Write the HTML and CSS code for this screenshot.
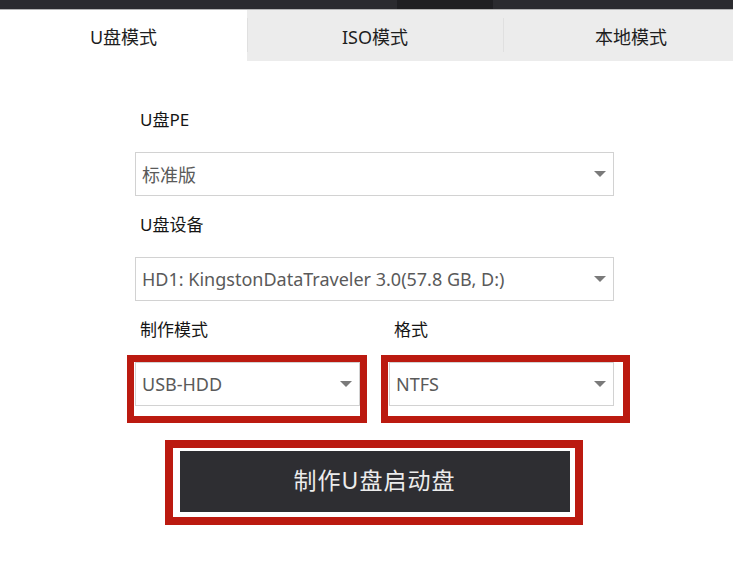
FILE: index.html
```html
<!DOCTYPE html>
<html lang="zh-CN">

<head>
    <meta charset="UTF-8">
    <meta name="viewport" content="width=device-width, initial-scale=1.0">
    <title>U盘启动盘制作</title>
    <link rel="stylesheet" href="styles.css">
</head>

<body>
    <div class="title-bar">
        <div class="title-bar-grip"></div>
    </div>

    <div class="tabs">
        <div class="tab active">U盘模式</div>
        <div class="tab">ISO模式</div>
        <div class="tab">本地模式</div>
    </div>

    <div class="form">
        <div class="field">
            <div class="field-label">U盘PE</div>
            <div class="select">
                <span class="select-value">标准版</span>
                <span class="select-arrow"></span>
            </div>
        </div>

        <div class="field">
            <div class="field-label">U盘设备</div>
            <div class="select">
                <span class="select-value">HD1: KingstonDataTraveler 3.0(57.8 GB, D:)</span>
                <span class="select-arrow"></span>
            </div>
        </div>

        <div class="field-row">
            <div class="field half">
                <div class="field-label">制作模式</div>
                <div class="select marked">
                    <span class="select-value">USB-HDD</span>
                    <span class="select-arrow"></span>
                    <div class="mark mark-left"></div>
                </div>
            </div>
            <div class="field half">
                <div class="field-label">格式</div>
                <div class="select marked">
                    <span class="select-value">NTFS</span>
                    <span class="select-arrow"></span>
                    <div class="mark mark-right"></div>
                </div>
            </div>
        </div>

        <div class="action">
            <button class="make-button">制作U盘启动盘
                <span class="mark mark-button"></span>
            </button>
        </div>
    </div>
</body>

</html>
```

FILE: styles.css
```css
* {
    margin: 0;
    padding: 0;
    box-sizing: border-box;
}

body {
    font-family: 'Noto Sans', 'Noto Sans CJK SC', sans-serif;
    background: #ffffff;
    color: #222;
    width: 733px;
    height: 578px;
    overflow: hidden;
}

.title-bar {
    height: 10px;
    background: #2b2b2f;
    border-bottom: 1px solid #b4b4b4;
    display: flex;
    padding-left: 397px;
}

.title-bar-grip {
    width: 96px;
    height: 9px;
    background: #1f1f22;
}

.tabs {
    display: flex;
    height: 51px;
    background: #ececec;
    overflow: hidden;
}

.tab {
    flex: 0 0 256px;
    display: flex;
    align-items: center;
    justify-content: center;
    font-size: 18px;
    color: #1e1e1e;
    position: relative;
}

.tab:first-child {
    flex: 0 0 247px;
}

.tab.active {
    background: #ffffff;
}

.tab + .tab::before {
    content: "";
    position: absolute;
    left: 0;
    top: 8px;
    bottom: 9px;
    width: 1px;
    background: #e0e0e0;
}

.form {
    width: 479px;
    margin-left: 135px;
    padding-top: 47px;
}

.field {
    margin-bottom: 17px;
}

.field-label {
    font-size: 17px;
    line-height: 24px;
    padding-left: 5px;
    margin-bottom: 20px;
    color: #151515;
}

.field-row {
    display: flex;
    justify-content: space-between;
}

.field.half {
    width: 225px;
}

.select {
    height: 44px;
    border: 1px solid #d2d2d2;
    display: flex;
    align-items: center;
    justify-content: space-between;
    padding: 0 7px 0 6px;
    position: relative;
}

.select-value {
    font-size: 18px;
    color: #5a5a5a;
}

.select-arrow {
    width: 0;
    height: 0;
    border-left: 6px solid transparent;
    border-right: 6px solid transparent;
    border-top: 6px solid #7a7a7a;
}

.mark {
    position: absolute;
    border: 7px solid #bb1a10;
    pointer-events: none;
}

.mark-left {
    left: -9px;
    top: -8px;
    width: 240px;
    height: 68px;
}

.mark-right {
    left: -9px;
    top: -8px;
    width: 249px;
    height: 68px;
}

.action {
    display: flex;
    justify-content: center;
    margin-top: 28px;
}

.make-button {
    position: relative;
    width: 390px;
    height: 61px;
    padding-bottom: 6px;
    background: #2e2e32;
    border: none;
    color: #ececec;
    font-family: 'Noto Sans', 'Noto Sans CJK SC', sans-serif;
    font-size: 23px;
    letter-spacing: 1px;
}

.mark-button {
    left: -15px;
    top: -11px;
    width: 418px;
    height: 85px;
    border-width: 8px;
}
```
